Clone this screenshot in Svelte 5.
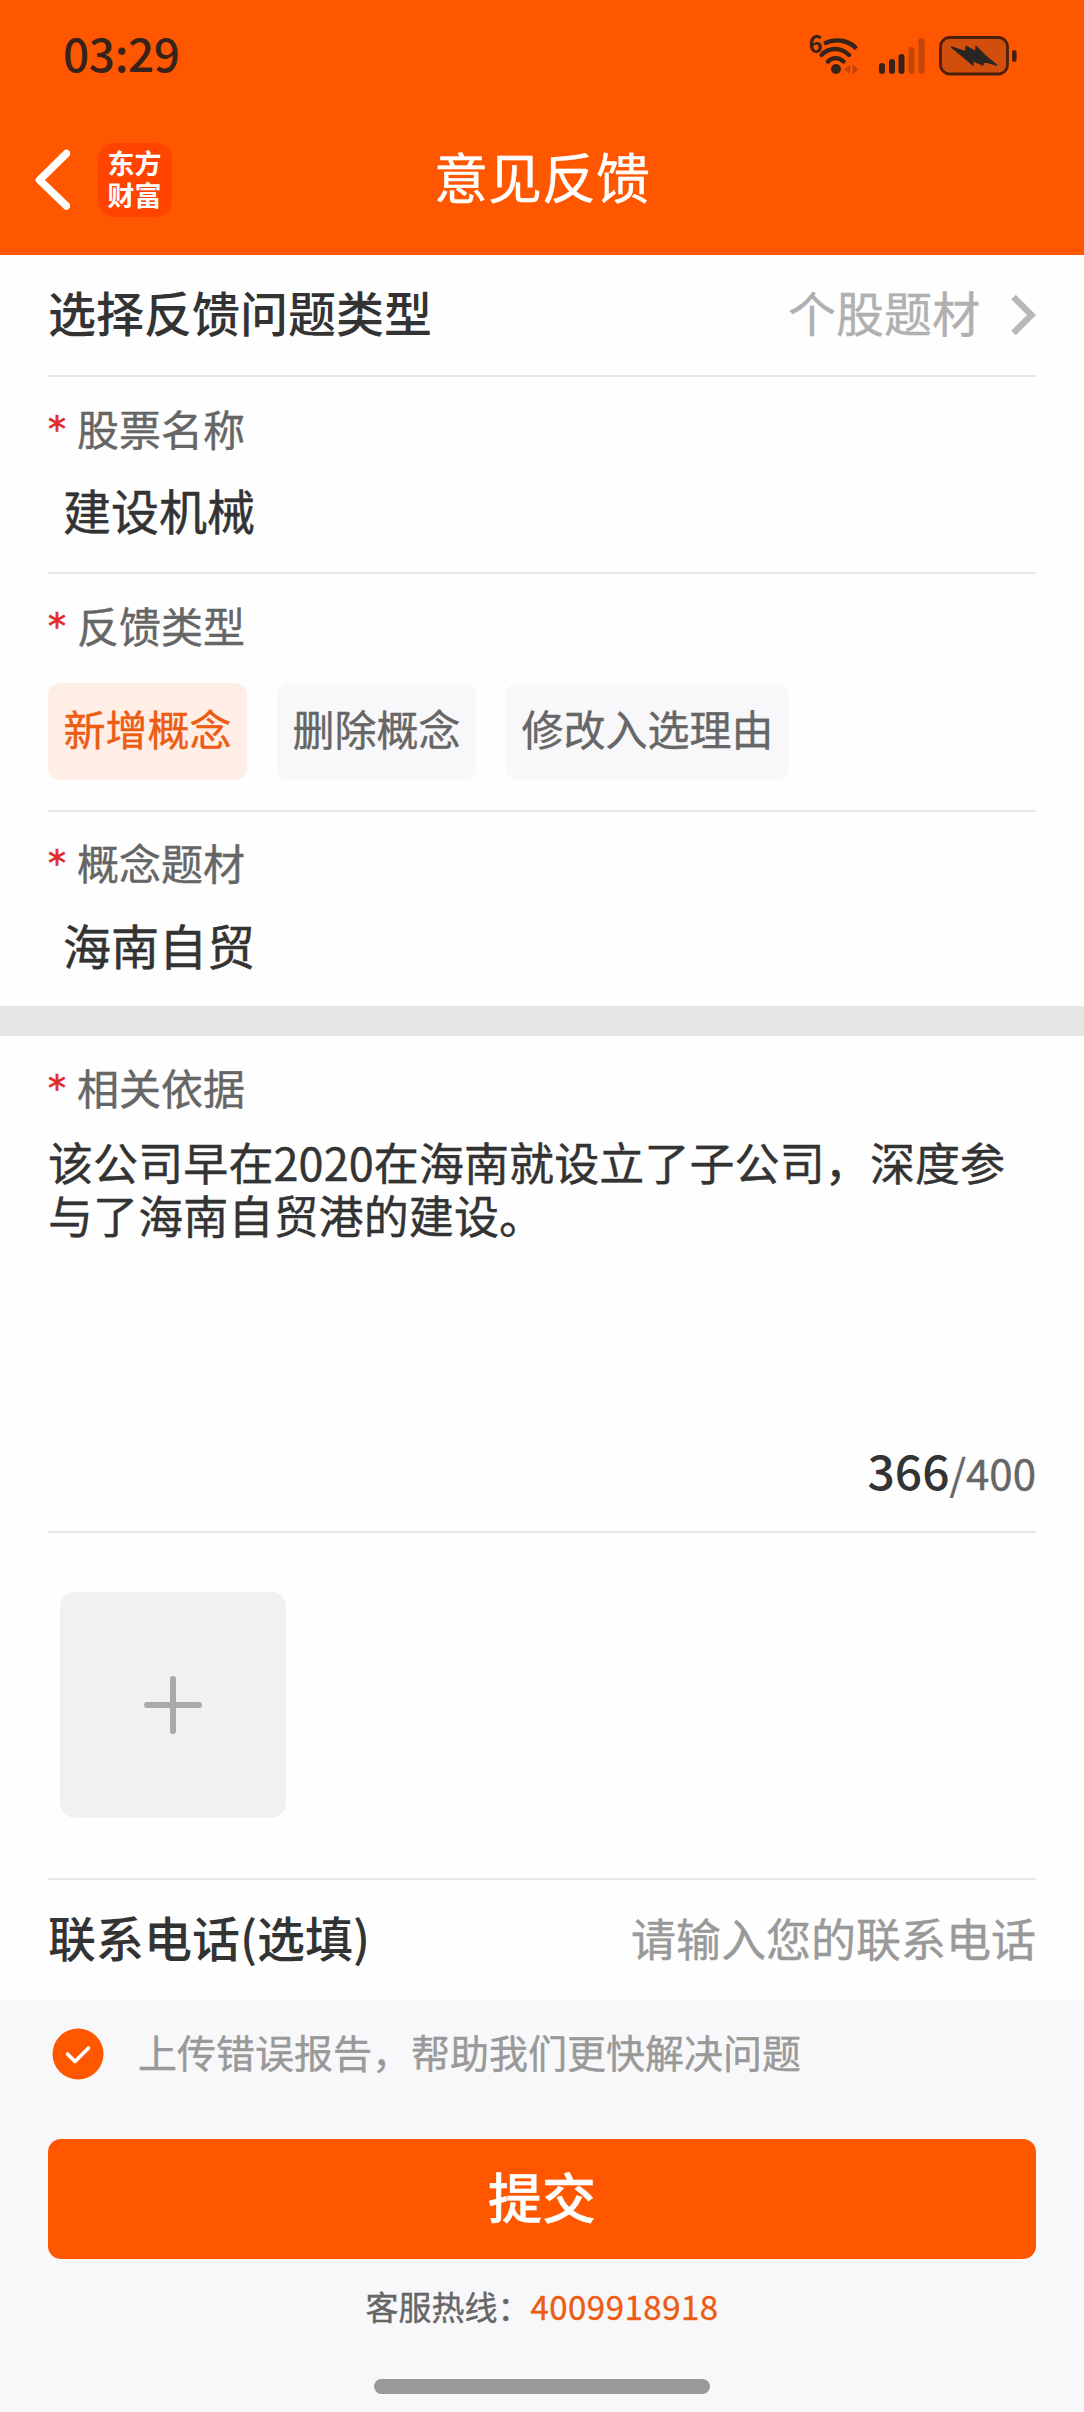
<script>
    let allTypes = ["新增概念", "删除概念", "修改入选理由"];
    let activeType = "新增概念";
    let stockName = "建设机械";
    let concept = "海南自贸";
    let reason = "该公司早在2020在海南就设立了子公司，深度参与了海南自贸港的建设。";
    let phone = "";
    let uploadLog = true;

    function selectType(type) {
        activeType = type;
    }
</script>

<main>
    <header>
        <div class="status-bar">
            <span class="time">03:29</span>
            <svg class="status-icons" viewBox="0 -12 240 60" width="240" height="60">
                <!-- wifi -->
                <text x="0.5" y="18" class="wifi-gen">6</text>
                <g fill="none" stroke="#38231a" stroke-width="4.4" stroke-linecap="round">
                    <path d="M16 8.500 C28 3 40 5 48.500 13.500" stroke-linecap="butt" />
                    <path d="M13.500 20 C21 12 33 12 41 20" />
                    <path d="M20 26.500 C24 22 31 22 35.500 26.500" />
                </g>
                <circle cx="28" cy="34" r="5" fill="#38231a" />
                <path d="M36 34.500 l6 -5 v10 z M50.500 34.500 l-6 -5 v10 z" fill="#c2460b" />
                <!-- signal -->
                <g fill="#38231a">
                    <rect x="71" y="28" width="6" height="11" rx="3" />
                    <rect x="81" y="24" width="6" height="15" rx="3" />
                    <rect x="90.500" y="19" width="6" height="20" rx="3" />
                </g>
                <g fill="#c2460b">
                    <rect x="100.500" y="12" width="6" height="27" rx="3" />
                    <rect x="110.500" y="3" width="6" height="36" rx="3" />
                </g>
                <!-- battery -->
                <rect x="132.500" y="2.500" width="67" height="36.500" rx="9" fill="#d24e0c" stroke="#48200c" stroke-width="2.800" />
                <rect x="204" y="15" width="4.600" height="12" rx="2.300" fill="#48200c" />
                <path d="M143.500 12 L158 17 V11.500 L168 17 V11.500 L177.500 21 L188.500 30 L175 26 V30 L165 25.500 V30 Z" fill="#2a2624" stroke="#2a2624" stroke-width="1.500" stroke-linejoin="round" />
            </svg>
        </div>
        <nav>
            <div class="nav-left">
                <svg class="back" viewBox="0 0 36 62" width="36" height="62">
                    <path d="M32.500 4.500 L5.500 31 L32.500 57" fill="none" stroke="#fff" stroke-width="7.500" stroke-linecap="round" stroke-linejoin="round" />
                </svg>
                <div class="logo">
                    <span>东方</span>
                    <span>财富</span>
                </div>
            </div>
            <h1>意见反馈</h1>
            <div class="nav-right"></div>
        </nav>
    </header>

    <section class="form">
        <div class="row type-row">
            <span class="row-title">选择反馈问题类型</span>
            <span class="row-value">个股题材</span>
            <svg viewBox="0 0 26 42" width="26" height="42">
                <path d="M3.500 3 L21.500 21 L3.500 39" fill="none" stroke="#b8b8b8" stroke-width="6.500" />
            </svg>
        </div>
        <div class="field">
            <div class="label"><i>*</i>股票名称</div>
            <div class="value">{stockName}</div>
        </div>
        <div class="field chips-field">
            <div class="label"><i>*</i>反馈类型</div>
            <div class="chips">
                {#each allTypes as type}
                <button class="chip" class:active={type === activeType} on:click={() => selectType(type)}>{type}</button>
                {/each}
            </div>
        </div>
        <div class="field last">
            <div class="label"><i>*</i>概念题材</div>
            <div class="value">{concept}</div>
        </div>
    </section>

    <div class="gap"></div>

    <section class="form">
        <div class="field reason-field">
            <div class="label"><i>*</i>相关依据</div>
            <p class="reason">{reason}</p>
            <div class="counter"><b>366</b>/400</div>
        </div>
        <div class="upload">
            <button class="add" aria-label="添加图片">
                <svg viewBox="0 0 60 60" width="60" height="60">
                    <path d="M30 4 V56 M4 30 H56" stroke="#aaa" stroke-width="6" stroke-linecap="round" />
                </svg>
            </button>
        </div>
        <div class="row phone-row">
            <span class="row-title">联系电话(选填)</span>
            <input type="text" placeholder="请输入您的联系电话" bind:value={phone}>
        </div>
    </section>

    <footer>
        <button class="agree" on:click={() => uploadLog = !uploadLog}>
            <svg viewBox="0 0 52 52" width="52" height="52">
                <circle cx="26" cy="26" r="25.500" fill={uploadLog ? "#ff5700" : "#ccc"} />
                <path d="M15.500 26 L23 33.500 L36.500 20" fill="none" stroke="#fff" stroke-width="3.600" stroke-linecap="round" stroke-linejoin="round" />
            </svg>
            <span>上传错误报告，帮助我们更快解决问题</span>
        </button>
        <button class="submit">提交</button>
        <div class="hotline">客服热线：<span>4009918918</span></div>
        <div class="home-bar"></div>
    </footer>
</main>

<style>
    :global(body){
        margin: 0;
        background-color: #f8f8fa;
    }
    *{
        box-sizing: border-box;
    }
    main{
        width: 1084px;
        height: 2412px;
        display: flex;
        flex-direction: column;
        overflow: hidden;
        font-family: "Noto Sans CJK SC", sans-serif;
        color: #333;
        -webkit-text-stroke: 0.4px;
    }
    button, input{
        font-family: inherit;
        border: none;
        padding: 0;
        background: none;
    }
    header{
        height: 255px;
        background-color: #ff5700;
    }
    .status-bar{
        height: 105px;
        padding: 1px 36px 0 63px;
        display: flex;
        align-items: center;
        justify-content: space-between;
    }
    .time{
        padding-bottom: 2px;
        font-size: 46px;
        font-weight: 500;
        letter-spacing: -0.4px;
        color: #38231a;
    }
    .time, .logo, .row-title, .counter b, .wifi-gen{
        -webkit-text-stroke: 0;
    }
    .wifi-gen{
        font-size: 24px;
        font-weight: bold;
        fill: #38231a;
    }
    nav{
        height: 150px;
        padding: 0 34px;
        display: flex;
        align-items: center;
    }
    .nav-left, .nav-right{
        flex: 1;
        display: flex;
        align-items: center;
    }
    .logo{
        width: 74px;
        height: 74px;
        margin-left: 28px;
        padding: 1px 1px 0 0;
        border-radius: 16px;
        background-color: #ff4300;
        color: #fff;
        display: flex;
        flex-direction: column;
        align-items: center;
        justify-content: center;
        font-family: "Liberation Sans", "Noto Sans CJK SC", sans-serif;
        font-size: 27px;
        font-weight: bold;
        line-height: 32px;
    }
    h1{
        margin: 0 0 8px;
        color: #fff;
        font-size: 54px;
        font-weight: 400;
        line-height: 80px;
    }
    .form{
        padding: 0 48px;
        background-color: #fefefe;
    }
    .row{
        display: flex;
        align-items: center;
    }
    .type-row{
        height: 122px;
        border-bottom: 2px solid #e8e8e8;
    }
    .row-title{
        flex: 1;
        padding-bottom: 8px;
        font-size: 48px;
        font-weight: 500;
    }
    .row-value{
        padding-bottom: 8px;
        font-size: 48px;
        color: #b0b0b0;
        margin-right: 30px;
    }
    .field{
        height: 197px;
        padding-top: 20px;
        border-bottom: 2px solid #e8e8e8;
    }
    .label{
        display: flex;
        height: 62px;
        line-height: 62px;
        font-size: 42px;
        color: #666;
    }
    .label i{
        width: 29px;
        padding-top: 1px;
        font-family: "DejaVu Sans", sans-serif;
        font-size: 36px;
        font-style: normal;
        color: #e02a2a;
        -webkit-text-stroke: 0.7px;
    }
    .value{
        padding-left: 15px;
        margin-top: 14px;
        font-size: 48px;
        line-height: 72px;
        -webkit-text-stroke: 0.5px;
    }
    .chips-field{
        height: 238px;
    }
    .chips{
        display: flex;
        gap: 30px;
        margin-top: 27px;
    }
    .chip{
        height: 97px;
        padding: 0 15.5px 8px;
        border-radius: 12px;
        background-color: #f8f8fa;
        color: #666;
        font-size: 42px;
        -webkit-text-stroke: 0.4px;
    }
    .chip.active{
        background-color: #ffeee6;
        color: #ec5c14;
    }
    .last{
        height: 194px;
        padding-top: 19px;
        border-bottom: none;
    }
    .last .value{
        margin-top: 15px;
    }
    .gap{
        height: 30px;
        background-color: #e5e5e5;
    }
    .reason-field{
        height: 497px;
        padding-top: 20px;
    }
    .reason{
        margin: 17px 0 0;
        height: 298px;
        font-size: 45px;
        line-height: 53px;
        letter-spacing: 0.1px;
    }
    .counter{
        text-align: right;
        font-size: 42px;
        line-height: 72px;
        color: #666;
    }
    .counter b{
        font-size: 48px;
        font-weight: 500;
        color: #333;
    }
    .upload{
        height: 347px;
        padding: 59px 12px;
        border-bottom: 2px solid #e8e8e8;
    }
    .add{
        width: 226px;
        height: 226px;
        border-radius: 15px;
        background-color: #f1f1f4;
        display: flex;
        align-items: center;
        justify-content: center;
    }
    .phone-row{
        height: 120px;
    }
    .phone-row input{
        width: 420px;
        padding-bottom: 6px;
        font-size: 45px;
        text-align: right;
        outline: none;
        -webkit-text-stroke: 0.4px;
    }
    input::placeholder{
        color: #999;
    }
    footer{
        flex: 1;
        padding: 0 48px;
        background-color: #f8f8fa;
        display: flex;
        flex-direction: column;
    }
    .agree{
        height: 107px;
        padding-left: 4px;
        display: flex;
        align-items: center;
        gap: 34px;
        font-size: 39px;
        color: #999;
    }
    .agree span{
        padding-bottom: 6px;
    }
    .submit{
        height: 120px;
        margin-top: 32px;
        padding-bottom: 7px;
        border-radius: 13px;
        background-color: #ff5700;
        color: #fff;
        font-size: 54px;
        font-weight: 500;
    }
    .hotline{
        margin-top: 22px;
        text-align: center;
        font-size: 33px;
        line-height: 50px;
        color: #666;
    }
    .hotline span{
        color: #ec5c14;
        letter-spacing: 0.5px;
    }
    .home-bar{
        width: 336px;
        height: 15px;
        margin: 48px auto 0;
        border-radius: 8px;
        background-color: #999;
    }
</style>
